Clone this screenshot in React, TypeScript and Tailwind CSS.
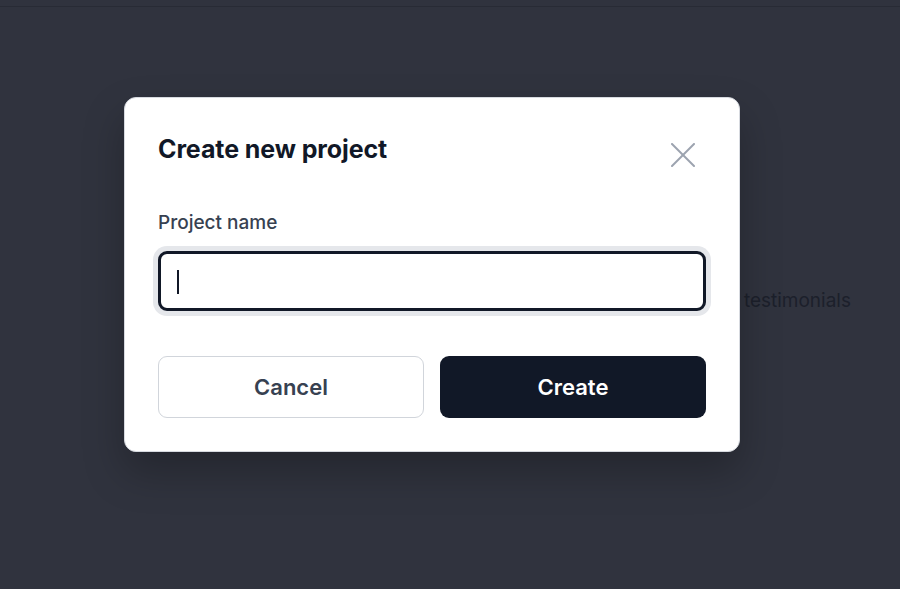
import { useState } from "react";

function CloseIcon() {
  return (
    <svg width="24" height="24" viewBox="0 0 24 24" fill="none" stroke="currentColor" strokeWidth="2" strokeLinecap="round">
      <path d="M1 1l22 22" />
      <path d="M23 1 1 23" />
    </svg>
  );
}

export default function App() {
  const [name, setName] = useState("");

  return (
    <div className="relative h-[589px] w-[900px] overflow-hidden bg-[#30333e] font-['Inter',sans-serif]">
      {/* page behind the overlay */}
      <div className="h-[7px] border-b border-[#282b35]" />
      <div className="flex justify-end pr-[49px] pt-[280px]">
        <span className="text-[19px] text-[#1c202b]">testimonials</span>
      </div>

      {/* dialog */}
      <div className="absolute left-[124px] top-[97px] w-[616px] rounded-xl border border-[#d7dae0] bg-white px-[33px] pt-[33px] pb-[33px] shadow-[0_20px_40px_rgba(0,0,0,0.25)]">
        <div className="flex items-start justify-between">
          <h2 className="pt-[2px] text-[25px] leading-[32px] font-bold tracking-[-0.1px] text-[#111827]">
            Create new project
          </h2>
          <button className="mr-[11px] mt-[12px] text-[#9ca3af]">
            <CloseIcon />
          </button>
        </div>

        <label className="mt-[42px] block text-[19px] leading-[28px] font-medium text-[#374151]">
          Project name
        </label>
        <div className="relative mt-[14px]">
          <input
            autoFocus
            value={name}
            onChange={(e) => setName(e.target.value)}
            className="block h-[60px] w-full rounded-[9px] border-[3px] border-[#111827] bg-white px-[17px] text-[20px] text-[#111827] caret-[#111827] shadow-[0_0_0_5px_#e5e7eb] outline-none"
          />
          {name === "" && (
            <span className="pointer-events-none absolute left-[19px] top-[19px] h-[24px] w-[2px] bg-[#111827]" />
          )}
        </div>

        <div className="mt-[45px] grid grid-cols-2 gap-[16px]">
          <button className="h-[62px] rounded-[9px] border border-[#d1d5db] bg-white text-[22px] font-semibold text-[#374151]">
            Cancel
          </button>
          <button className="h-[62px] rounded-[9px] bg-[#111827] text-[22px] font-semibold text-white">
            Create
          </button>
        </div>
      </div>
    </div>
  );
}
